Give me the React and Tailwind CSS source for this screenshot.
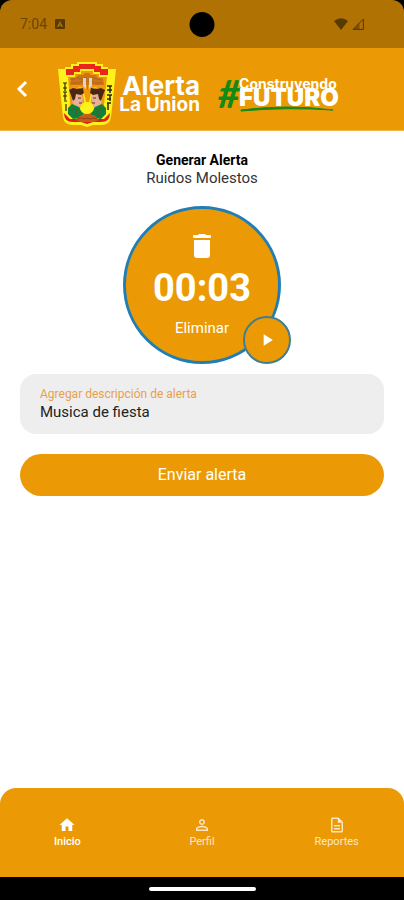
import { useState } from "react";
import {
  MdPlayArrow,
  MdHome,
  MdPersonOutline,
  MdOutlineDescription,
} from "react-icons/md";

function StatusBar() {
  return (
    <div className="relative bg-black">
      <div className="h-12 rounded-t-xl bg-[#b07303] px-5 flex items-center justify-between text-[#6b4603]">
        <div className="flex items-center gap-2">
          <span className="text-sm">7:04</span>
          <svg className="w-[10px] h-[10px]" viewBox="0 0 10 10" aria-hidden="true">
            <rect width="10" height="10" rx="1" fill="#573904" />
            <path d="M5 1.8 8 8H6.6L6 6.8H4L3.400 8H2z M5 4l-.6 1.600h1.200z" fill="#b07303" fillRule="evenodd" />
          </svg>
        </div>
        <div className="flex items-center gap-1 pr-5">
          <svg className="w-[14px] h-3" viewBox="0 0 14 12" aria-hidden="true">
            <path d="M0 3Q7-2.500 14 3L7 12z" fill="#573904" />
          </svg>
          <svg className="w-3 h-3" viewBox="0 0 12 12" aria-hidden="true">
            <path d="M1 11.400 11.400 1v10.400z" fill="none" stroke="#573904" />
            <path d="M1 11.400 7.500 5v6.400z" fill="#573904" opacity=".6" />
          </svg>
        </div>
      </div>
      {/* Camera hole */}
      <div className="absolute left-1/2 top-3 size-[25px] -translate-x-1/2 rounded-full bg-black" />
    </div>
  );
}

function Shield() {
  return (
    <svg className="w-[58px] h-[66px]" viewBox="0 0 58 66" role="img" aria-label="Escudo de La Union">
      {/* Stepped frame */}
      <path d="M0 7h7V5h6V2h6V0h20v2h6v3h5v2h8l-3 30-2 18q-1 8-10 8h-8l-6 2-6-2H15Q6 63 5 55L3 37z" fill="#fff21a" />
      <path d="M8 10V7h7V4h6V2h16v2h6v3h7v6h-8v-3h-6V7H22v3h-6v3H8z" fill="#e8261a" />
      <path d="M6 51q0 9 9 9h8l6 2 6-2h8q9 0 9-9l-6 6H12z" fill="#dc1f1c" />
      <path d="M10 15h7v-3h6V9h12v3h6v3h8l-4 37-6 4H19l-6-4z" fill="#f0980c" />
      {/* Temple over the faces */}
      <path d="M13 16h5l2-3h5l2-2h4l2 2h5l2 3h5l1 7H12z" fill="#cf7415" />
      <path d="M12 17h5l2-2 2 2h4l2-2 2 2h4l2-2 2 2h4l2 1M13 21h9l2-2h10l2 2h9" fill="none" stroke="#a8661c" strokeWidth="1" />
      <path d="M24 28l-4-3 5 1 3 14h3l3-14 5-1-4 3-3 16h-5z" fill="#f8ea16" />
      <path d="M25 16h3v11l-3-3zM31 16h3v8l-3 3z" fill="#d9d5d0" />
      <path d="M29.500 16v12" stroke="#a67a4f" />
      {/* Left face */}
      <path d="M14 31h9l2 6-1 2 1 3-3 1v5h-4l-4-9z" fill="#e6b196" />
      <path d="M11 28l4-2 4 1 6-1 1 5-3 2-5-1-1 5-2 2-2-6z" fill="#4a2713" />
      <path d="M20 36h3M21 41h3" stroke="#70291c" />
      {/* Right face */}
      <path d="M44 31h-9l-2 6 1 2-1 3 3 1v5h4l4-9z" fill="#e6b196" />
      <path d="M47 28l-4-2-4 1-6-1-1 5 3 2 5-1 1 5 2 2 2-6z" fill="#4a2713" />
      <path d="M38 36h-3M37 41h-3" stroke="#70291c" />
      {/* Leaves and sun */}
      <path d="M10 46l4-4 7 3 5 6-3 5-8 1-5-5z" fill="#12803b" />
      <path d="M48 46l-4-4-7 3-5 6 3 5 8 1 5-5z" fill="#12803b" />
      <path d="M14 46l5 3-2 5M44 46l-5 3 2 5" fill="none" stroke="#67501a" />
      <ellipse cx="29" cy="46" rx="7" ry="6" fill="#fff21a" />
      <path d="M18 58l4-4 5-2h5l5 2 4 4-5 2H23z" fill="#c95b17" />
      <path d="M19 57l4-1 3 1 3-1 3 1 3-1 4 1" fill="none" stroke="#8a4517" />
      {/* Marks on both sides */}
      <path d="M5 21h4M7 21v8M5 26h4M5 30h4M7 30v8M5 34h4M6 39h3M8 42v7" fill="none" stroke="#2b260b" strokeWidth="1.200" />
      <path d="M49 24h5M52 24v7M49 28h5M49 33h5M52 33v6M49 37h4M49 41h4M50 41v7" fill="none" stroke="#2b260b" strokeWidth="1.500" />
    </svg>
  );
}

function TrashIcon() {
  return (
    <svg className="w-[20px] h-6" viewBox="0 0 20 24" fill="currentColor" aria-hidden="true">
      <path d="M7 0h6l1 1h4q1 0 1 1v1q0 1-1 1H2Q1 4 1 3V2q0-1 1-1h4z" />
      <path d="M2 6h16v15q0 3-3 3H5q-3 0-3-3z" />
    </svg>
  );
}

function Header() {
  return (
    <header className="h-[83px] bg-[#eb9a05] border-b border-[#f0b64c] pl-4 flex items-center text-white">
      <button aria-label="Volver" className="w-3 h-10 flex items-center justify-center">
        <svg className="w-3 h-[18px]" viewBox="0 0 12 18" fill="none" stroke="currentColor" strokeWidth="3">
          <path d="M10 2 3 9l7 7" />
        </svg>
      </button>
      <div className="flex items-center ml-[30px] pt-3">
        <Shield />
        <div className="font-['Inter',sans-serif] w-[84px] whitespace-nowrap flex flex-col items-end font-bold">
          <p className="text-[26px] leading-5">Alerta</p>
          <p className="text-[19px] leading-[18px]">La Union</p>
        </div>
      </div>
      <div className="flex items-center ml-[18px] pt-2 font-['Inter',sans-serif]">
        <span className="font-['Lato',sans-serif] text-[38px] leading-9 font-black italic text-[#138a16]">#</span>
        <div className="-ml-px pt-1">
          <p className="text-[14px] leading-3 font-bold">Construyendo</p>
          <p className="text-[24px] leading-4 font-black">FUTURO</p>
          <svg className="w-[96px] h-[6px]" viewBox="0 0 96 6" aria-hidden="true">
            <path d="M2 4Q48-2 94 4Q48 1 2 5z" fill="#138a16" stroke="#138a16" />
          </svg>
        </div>
      </div>
    </header>
  );
}

function Recorder() {
  return (
    <div className="relative size-[158px] mx-auto">
      <button className="size-full rounded-full border-3 border-[#217eb5] bg-[#eb9a05] text-white flex flex-col items-center pt-[25px]">
        <TrashIcon />
        <span className="text-[38px] leading-[48px] mt-[6px] font-bold">00:03</span>
        <span className="text-[15px] leading-5 mt-[6px]">Eliminar</span>
      </button>
      {/* Play button over the edge of the circle */}
      <button
        aria-label="Reproducir"
        className="absolute -right-[10px] bottom-0 size-12 rounded-full border-2 border-[#407f91] bg-[#eb9a05] text-white flex items-center justify-center"
      >
        <MdPlayArrow className="size-5" />
      </button>
    </div>
  );
}

const tabs = [
  { label: "Inicio", Icon: MdHome, active: true },
  { label: "Perfil", Icon: MdPersonOutline },
  { label: "Reportes", Icon: MdOutlineDescription },
];

function BottomNav() {
  return (
    <nav className="h-[89px] rounded-t-2xl bg-[#eb9a05] grid grid-cols-3 items-center">
      {tabs.map(({ label, Icon, active }) => (
        <a
          key={label}
          href="#"
          className={`flex flex-col items-center ${active ? "text-white font-medium" : "text-[#fce6c8]"}`}
        >
          <Icon className="size-[18px]" />
          <span className="text-[11px] leading-4">{label}</span>
        </a>
      ))}
    </nav>
  );
}

function App() {
  const [description, setDescription] = useState("Musica de fiesta");

  return (
    <div className="min-h-screen flex flex-col bg-white font-['Roboto',sans-serif]">
      <StatusBar />
      <Header />

      <main className="flex-1 px-5 pt-5">
        <div className="text-center text-[15px] leading-[18px] text-[#333]">
          <h1 className="text-sm leading-[18px] font-bold text-black">Generar Alerta</h1>
          <p>Ruidos Molestos</p>
        </div>

        <div className="mt-[19px]">
          <Recorder />
        </div>

        <div className="mt-[10px] h-[60px] rounded-2xl bg-[#eeeeee] px-5 flex flex-col justify-center">
          <label htmlFor="description" className="text-[12px] leading-4 text-[#e9a04b]">
            Agregar descripción de alerta
          </label>
          <input
            id="description"
            value={description}
            onChange={(e) => setDescription(e.target.value)}
            className="w-full text-[15px] leading-5 text-[#222] bg-transparent outline-none"
          />
        </div>

        <button className="mt-5 w-full h-[42px] rounded-full bg-[#eb9a05] text-white text-base">
          Enviar alerta
        </button>
      </main>

      <BottomNav />

      {/* Gesture bar */}
      <div className="h-[23px] bg-black flex items-center justify-center">
        <div className="w-[107px] h-1 rounded-full bg-white" />
      </div>
    </div>
  );
}

export default App;
